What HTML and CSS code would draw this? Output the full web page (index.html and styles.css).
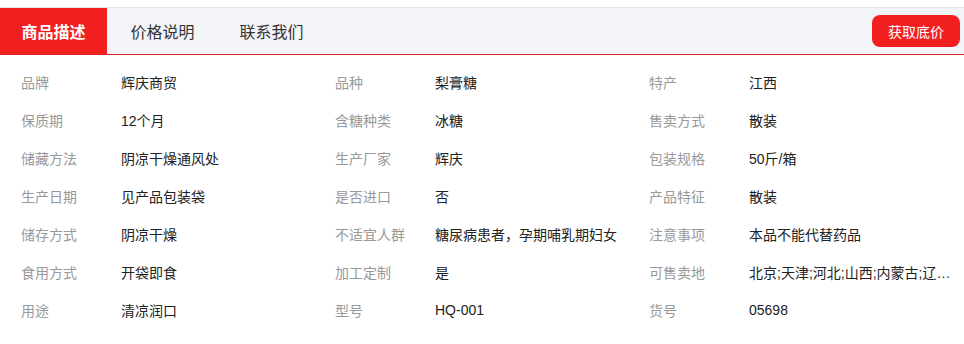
FILE: index.html
```html
<!DOCTYPE html>
<html lang="zh-CN">
<head>
<meta charset="utf-8">
<title>商品描述</title>
<link rel="stylesheet" href="styles.css">
</head>
<body>
<div class="page">
  <div class="tabbar">
    <div class="tabs">
      <div class="tab active">商品描述</div>
      <div class="tab">价格说明</div>
      <div class="tab">联系我们</div>
    </div>
    <button class="btn">获取底价</button>
  </div>
  <div class="attrs">
    <div class="item"><span class="k">品牌</span><span class="v">辉庆商贸</span></div>
    <div class="item"><span class="k">品种</span><span class="v">梨膏糖</span></div>
    <div class="item"><span class="k">特产</span><span class="v">江西</span></div>

    <div class="item"><span class="k">保质期</span><span class="v">12个月</span></div>
    <div class="item"><span class="k">含糖种类</span><span class="v">冰糖</span></div>
    <div class="item"><span class="k">售卖方式</span><span class="v">散装</span></div>

    <div class="item"><span class="k">储藏方法</span><span class="v">阴凉干燥通风处</span></div>
    <div class="item"><span class="k">生产厂家</span><span class="v">辉庆</span></div>
    <div class="item"><span class="k">包装规格</span><span class="v">50斤/箱</span></div>

    <div class="item"><span class="k">生产日期</span><span class="v">见产品包装袋</span></div>
    <div class="item"><span class="k">是否进口</span><span class="v">否</span></div>
    <div class="item"><span class="k">产品特征</span><span class="v">散装</span></div>

    <div class="item"><span class="k">储存方式</span><span class="v">阴凉干燥</span></div>
    <div class="item"><span class="k">不适宜人群</span><span class="v">糖尿病患者，孕期哺乳期妇女</span></div>
    <div class="item"><span class="k">注意事项</span><span class="v">本品不能代替药品</span></div>

    <div class="item"><span class="k">食用方式</span><span class="v">开袋即食</span></div>
    <div class="item"><span class="k">加工定制</span><span class="v">是</span></div>
    <div class="item"><span class="k">可售卖地</span><span class="v">北京;天津;河北;山西;内蒙古;辽宁;吉林;黑龙江;上海;江苏;浙江</span></div>

    <div class="item"><span class="k">用途</span><span class="v">清凉润口</span></div>
    <div class="item"><span class="k">型号</span><span class="v">HQ-001</span></div>
    <div class="item"><span class="k">货号</span><span class="v">05698</span></div>
  </div>
</div>
</body>
</html>
```
FILE: styles.css
```css
* { box-sizing: border-box; }
html, body {
  margin: 0;
  padding: 0;
  background: #ffffff;
}
body {
  font-family: "Liberation Sans", "Noto Sans CJK SC", sans-serif;
  color: #222;
}
.page {
  padding-top: 7px;
}
.tabbar {
  display: flex;
  align-items: center;
  justify-content: space-between;
  height: 48px;
  background: #f3f4f8;
  border-top: 1px solid #e2e2e4;
  border-bottom: 1px solid #d9242a;
  padding-right: 4px;
}
.tabs {
  display: flex;
  align-self: stretch;
  gap: 2px;
}
.tab {
  display: flex;
  align-items: center;
  justify-content: center;
  width: 107px;
  font-size: 16px;
  color: #333;
}
.tab.active {
  background: #f21f21;
  color: #fff;
  font-weight: bold;
}
.btn {
  width: 88px;
  height: 32px;
  border: none;
  border-radius: 8px;
  background: #f21f21;
  color: #fff;
  font-family: "Liberation Sans", "Noto Sans CJK SC", sans-serif;
  font-size: 14px;
  padding: 0;
}
.attrs {
  display: grid;
  grid-template-columns: 314px 314px 314px;
  padding: 8px 0 0 21px;
}
.item {
  display: flex;
  height: 38px;
  align-items: center;
  font-size: 14px;
}
.k {
  width: 100px;
  flex: none;
  color: #999;
}
.v {
  width: 204px;
  color: #222;
  white-space: nowrap;
  overflow: hidden;
  text-overflow: ellipsis;
}
```
